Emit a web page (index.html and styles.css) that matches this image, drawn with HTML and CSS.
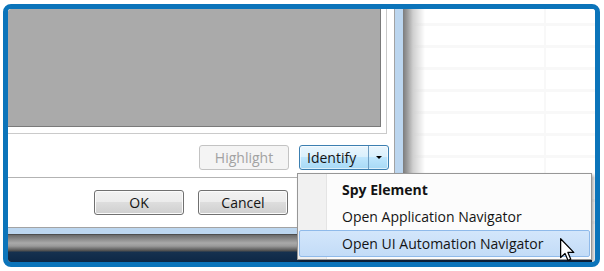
FILE: index.html
```html
<!DOCTYPE html>
<html lang="en">
<head>
<meta charset="UTF-8">
<title>Identify menu</title>
<link rel="stylesheet" href="styles.css">
</head>
<body>

<div class="frame">
    <div class="screen">

        <div class="top">
            <div class="dialog">
                <div class="dialog-body">
                    <div class="group">
                        <div class="preview"></div>
                    </div>

                    <div class="tools">
                        <button class="btn is-disabled">Highlight</button>
                        <div class="split">
                            <span class="split-main">Identify</span>
                            <span class="split-arrow"></span>
                        </div>
                    </div>

                    <div class="actions">
                        <button class="btn">OK</button>
                        <button class="btn">Cancel</button>
                    </div>
                </div>
            </div>

            <div class="desktop"></div>
        </div>

        <div class="taskbar"></div>

        <!-- menu opened from the Identify arrow -->
        <ul class="menu">
            <li class="menu-item is-bold">Spy Element</li>
            <li class="menu-item">Open Application Navigator</li>
            <li class="menu-item is-hover">Open UI Automation Navigator</li>
        </ul>

        <svg class="cursor" width="15" height="24" viewBox="0 0 12 19">
            <path d="M0.5 0.5 L0.5 15.5 L4 12.2 L6.4 17.8 L8.6 16.9 L6.3 11.4 L11 11.4 Z" fill="#fff" stroke="#000" stroke-width="1" stroke-linejoin="round"/>
        </svg>

    </div>
</div>

</body>
</html>
```

FILE: styles.css
```css
body {
    margin: 0;
    background: #fff;
    font-family: "Open Sans", "Noto Sans", sans-serif;
    font-size: 14px;
    color: #141414;
}

/* blue outline round the shot */
.frame {
    margin: 4px 0 0 3px;
    width: 587px;
    height: 253px;
    border: 5px solid #0b74ba;
    border-radius: 8px;
    overflow: hidden;
    background: #fff;
}

.screen {
    position: relative;
    display: flex;
    flex-direction: column;
    height: 100%;
}

.top {
    display: flex;
    height: 225px;
}

/* dialog window */
.dialog {
    width: 387px;
    display: flex;
    flex-direction: column;
    border-right: 8px solid #bcd6ef;
    border-bottom: 6px solid #bcd6ef;
}

.dialog-body {
    flex: 1;
    background: #fff;
    border-right: 1px solid #a3a3a3;
    border-bottom: 1px solid #a3a3a3;
}

.group {
    width: 373px;
    padding: 0 5px 6px 0;
    border-right: 1px solid #cacaca;
    border-bottom: 1px solid #cacaca;
}

.preview {
    height: 117px;
    background: #aaa;
    border-right: 1px solid #7a7a7a;
    border-bottom: 1px solid #7a7a7a;
}

.tools {
    display: flex;
    justify-content: flex-end;
    gap: 10px;
    margin-top: 11px;
    padding-right: 5px;
}

.actions {
    display: flex;
    justify-content: flex-end;
    gap: 14px;
    margin-top: 7px;
    padding: 12px 106px 0 0;
    border-top: 1px solid #b3b3b3;
}

/* buttons */
.btn {
    width: 90px;
    height: 25px;
    padding: 0;
    font-family: inherit;
    font-size: 14px;
    color: #141414;
    border: 1px solid #707070;
    border-radius: 3px;
    background: linear-gradient(#f2f2f2, #ebebeb 50%, #dddddd 50%, #cfcfcf);
    box-shadow: inset 0 0 0 1px #fbfbfb;
}

.btn.is-disabled {
    color: #a2a2a2;
    border-color: #c3c3c3;
    background: #f4f4f4;
    box-shadow: none;
}

.split {
    width: 88px;
    height: 23px;
    display: flex;
    border: 1px solid #3c7fb1;
    border-radius: 3px;
    background: linear-gradient(#eaf6fd, #d9f0fc 50%, #bee6fd 50%, #a7d9f5);
    box-shadow: inset 0 0 0 1px rgba(255,255,255,0.6);
}

.split-main {
    flex: 1;
    line-height: 23px;
    padding-left: 7px;
    border-right: 1px solid #6f9dc1;
}

.split-arrow {
    width: 19px;
    display: flex;
    align-items: center;
    justify-content: center;
}

.split-arrow::before {
    content: "";
    border-left: 3px solid transparent;
    border-right: 3px solid transparent;
    border-top: 3px solid #000;
}

/* desktop behind the dialog */
.desktop {
    flex: 1;
    background:
        linear-gradient(to right, #7c7c7c, #9a9a9a 4px, #cfcfcf 10px, rgba(255,255,255,0) 22px),
        linear-gradient(to right, transparent 141px, #f8f8f8 141px, #f8f8f8 143px, transparent 143px),
        repeating-linear-gradient(to bottom, #fff 0, #fff 14px, #f8f8f8 14px, #f8f8f8 17px, #fff 17px, #fff 22px);
}

.taskbar {
    width: 584px;
    height: 28px;
    background: linear-gradient(#4e4e4e 0, #4e4e4e 1px, #6a6a6a 1px, #a9a9a9 9px, #9a9a9a 12px, #4c4c4c 17px, #16314f 18px, #0e2846 28px);
}

/* context menu */
.menu {
    position: absolute;
    left: 289px;
    top: 164px;
    width: 291px;
    margin: 0;
    padding: 2px 1px;
    list-style: none;
    background: #fcfcfc;
    border: 1px solid #979797;
    box-shadow: 2px 2px 3px rgba(0,0,0,0.3);
}

.menu::before {
    content: "";
    position: absolute;
    left: 0;
    top: 0;
    bottom: 0;
    width: 28px;
    background: #f1f1f1;
    border-right: 1px solid #e4e4e4;
}

.menu-item {
    position: relative;
    height: 25px;
    line-height: 25px;
    padding-left: 42px;
    border: 1px solid transparent;
    border-radius: 2px;
}

.menu-item.is-bold {
    font-weight: bold;
}

.menu-item.is-hover {
    background: linear-gradient(#d3e6fb, #c3dcf7);
    border-color: #8fbaea;
}

.cursor {
    position: absolute;
    left: 552px;
    top: 229px;
}
```
